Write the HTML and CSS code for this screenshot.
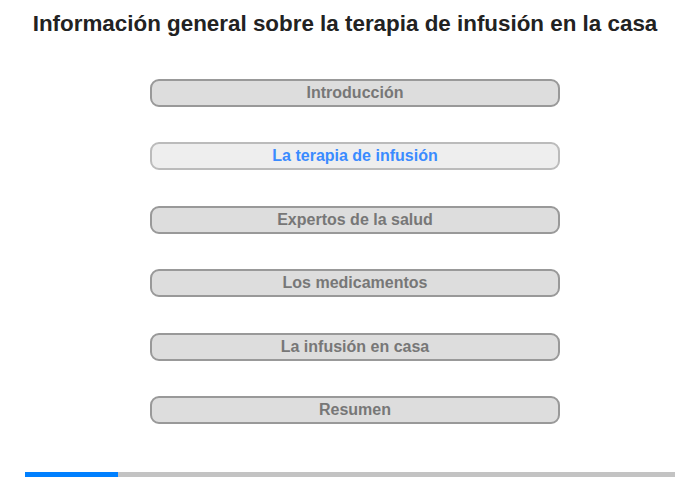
FILE: index.html
```html
<!DOCTYPE html>
<html lang="es">
<head>
<meta charset="utf-8">
<link rel="stylesheet" href="styles.css">
</head>
<body>
<div class="page">
  <h1 class="title">Información general sobre la terapia de infusión en la casa</h1>
  <nav class="menu">
    <div class="item">Introducción</div>
    <div class="item active">La terapia de infusión</div>
    <div class="item">Expertos de la salud</div>
    <div class="item">Los medicamentos</div>
    <div class="item">La infusión en casa</div>
    <div class="item">Resumen</div>
  </nav>
  <div class="progress"><div class="progress-fill" style="width:14.3%"></div></div>
</div>
</body>
</html>
```
FILE: styles.css
```css
html, body {
  margin: 0;
  padding: 0;
  background: #fff;
}
.page {
  width: 700px;
  height: 480px;
  font-family: "Liberation Sans", Arial, sans-serif;
  display: flex;
  flex-direction: column;
  align-items: center;
}
.title {
  margin: 10px 10px 0 0;
  font-size: 22.4px;
  line-height: 28px;
  font-weight: bold;
  color: #222;
  text-align: center;
  white-space: nowrap;
}
.menu {
  margin: 41px 0 0 10px;
  display: flex;
  flex-direction: column;
  gap: 35.4px;
}
.item {
  box-sizing: border-box;
  width: 410px;
  height: 28px;
  border: 2px solid #999;
  border-radius: 9px;
  background: #ddd;
  color: #777;
  font-size: 16px;
  font-weight: bold;
  line-height: 24px;
  text-align: center;
}
.item.active {
  background: #eee;
  border-color: #bbb;
  color: #3a8bff;
}
.progress {
  margin-top: 48px;
  width: 650px;
  height: 5px;
  background: #c3c3c3;
}
.progress-fill {
  height: 100%;
  background: #0080ff;
}
```
